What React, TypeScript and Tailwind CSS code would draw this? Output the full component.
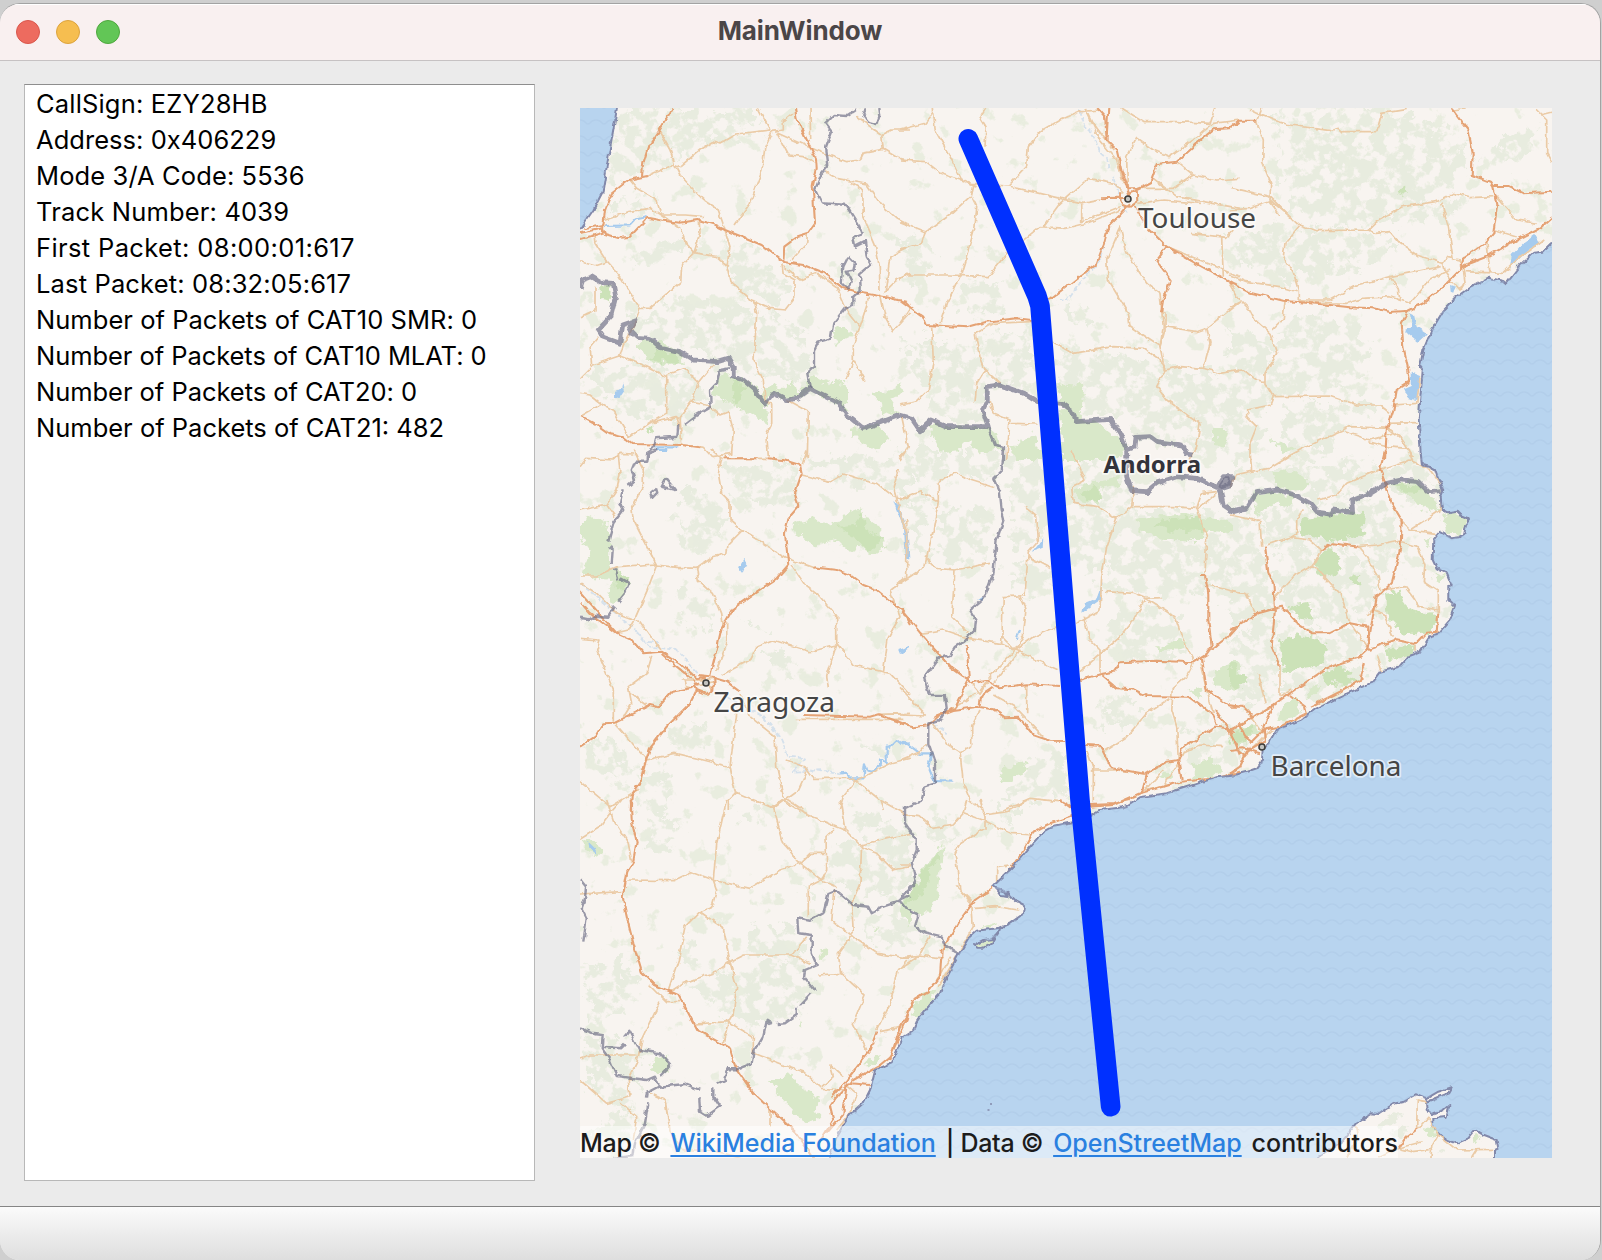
import React from "react";

type Tile = "A" | "B" | "C" | "D" | "E" | "F" | "G" | "H" | "I";

// The map is digitised on a 3x3 sheet grid; every sheet has three units per pixel.
const ORIGIN: Record<Tile, [number, number]> = {
  A: [570, 100], B: [900, 100], C: [1230, 100],
  D: [570, 450], E: [900, 450], F: [1230, 450],
  G: [570, 800], H: [900, 800], I: [1230, 800],
};

const pts = (tile: Tile, s: string) =>
  s.trim().split(/\s+/).map((p) => {
    const [x, y] = p.split(",").map(Number);
    return `${(ORIGIN[tile][0] + x / 3).toFixed(1)} ${(ORIGIN[tile][1] + y / 3).toFixed(1)}`;
  }).join(" L");

const lines = (data: Partial<Record<Tile, string>>) =>
  (Object.keys(data) as Tile[])
    .flatMap((t) => data[t]!.split("|").filter((s) => s.trim()).map((s) => "M" + pts(t, s)))
    .join(" ");

const areas = (data: Partial<Record<Tile, string>>) =>
  (Object.keys(data) as Tile[])
    .flatMap((t) => data[t]!.split("|").filter((s) => s.trim()).map((s) => "M" + pts(t, s) + "Z"))
    .join(" ");

const COAST =
  "M" +
  [
    pts("C", "975,428 966,430 940,455 910,458 870,495 828,550 820,543 775,533 720,562 680,590 640,632 605,690 580,750 570,800 578,810 572,880 566,960 572,1060"),
    pts("F", "572,10 576,45 600,52 615,60 622,80 640,120 632,140 636,180 655,190 680,185 690,195 720,207 705,225 700,255 690,262 665,265 630,245 610,270 608,330 620,355 650,370 665,405 655,410 655,450 675,470 660,510 625,550 600,558 570,605 535,618 508,650 450,665 425,698 330,740 260,775 215,808 140,840 120,875 98,900 95,935 80,955 50,965 0,978"),
    pts("E", "950,982 870,1008 800,1030 720,1042 680,1068"),
    pts("H", "670,22 600,30 550,60 460,78 430,95 390,140 340,200 280,258 300,285 325,290 322,275 350,305 375,318 372,340 330,370 300,383 230,392 205,415 175,465 135,540 120,580 110,590 60,650 50,665 40,690 5,712"),
    pts("G", "990,730 965,790 915,810 900,870 880,910 840,945 820,975 800,1010 775,1080"),
  ].join(" L");

const ATLANTIC = "M" + pts("A", "142,20 135,60 110,200 98,275 70,330 25,395");
const MALLORCA =
  "M" + pts("I", "255,1080 300,1050 340,1020 380,968 425,940 445,942 490,912 522,905 530,900 560,883 590,895 625,875 665,862 655,880 610,898 588,905 590,930 605,942 640,930 658,915 650,950 610,955 610,985 640,1015 680,1030 715,1015 735,990 760,1005 800,1020 805,1045 795,1050 795,1080");
const ISLETS = areas({ H: "222,435 250,420 275,418 300,388 275,430 250,443 232,443" });
const LAGOON = areas({ H: "290,268 310,272 326,290 305,288" });

const FOREST = areas({
  A: "145,24 570,24 560,90 430,125 330,185 175,235 105,270 130,120|40,800 280,790 290,930 200,960 100,880|200,440 330,420 320,480 220,500|180,650 330,600 500,620 700,680 710,850 560,840 400,760 200,700|290,820 380,830 420,900 330,980 290,950|440,430 560,450 680,560 600,620 500,560|110,310 260,290 260,340 110,340",
  B: "0,720 240,720 260,850 240,970 100,960 90,890|260,700 390,690 400,880 290,850|460,720 600,760 780,780 900,840 900,1060 700,1010 650,950 540,950 470,850|800,820 1020,820 1020,1070 900,1040|0,420 60,400 120,480 20,560|180,560 300,550 330,640 200,640|480,600 580,640 570,670 490,640",
  C: "140,24 440,24 640,80 720,150 690,260 600,290 440,370 270,380 180,330 150,240|140,24 440,24 420,90 300,90|170,230 420,220 420,320 280,370|0,420 130,370 400,400 500,440 420,490 200,530 0,500|150,660 300,640 420,720 400,870 200,890 120,850|0,680 120,720 130,880 60,1080 0,1080|160,900 460,920 340,980 300,1060 160,1080|740,180 860,80 940,80 870,200|480,290 640,310 740,290 660,350 520,380",
  D: "320,130 450,130 470,230 420,300 340,290|320,420 430,430 430,500 390,540 330,500|470,40 680,50 670,170 500,160|700,20 1020,20 1020,140 920,100 780,95|40,880 120,870 210,960 180,1020 90,970|220,980 290,950 300,1080 190,1080|570,600 640,600 690,680 640,690|520,510 590,540 580,555|300,850 400,820 400,900 320,890|880,850 970,860 960,920 890,910",
  E: "0,0 300,0 290,100 160,70 60,120|100,170 280,180 260,330 110,350|320,20 425,20 440,260 330,290|490,20 680,60 700,170 640,290 600,380 500,330|640,180 1020,180 1020,430 740,430 620,420|310,340 460,340 460,430 330,430|0,130 90,150 60,330 20,200|660,450 830,500 870,620 670,620 600,570|400,920 500,900 500,1040 300,1040|580,780 680,740 720,800 620,850|860,840 1020,830 1020,960 860,970",
  F: "0,60 440,40 430,110 260,150 200,130 0,180|90,180 460,130 500,220 500,330 440,390 380,290 110,290|0,200 90,220 130,440 130,600 0,520|150,290 380,300 440,420 420,510 340,500 250,540 140,450|0,560 120,560 150,720 70,780 0,740|140,550 410,560 400,620 280,660 160,730|210,680 400,640 400,690 230,760|450,60 570,40 630,130 640,180 500,140|470,580 560,590 500,650 440,650",
  G: "40,500 170,480 210,620 60,680|340,560 480,500 700,470 700,640 560,680 470,650|540,370 680,380 700,470 540,460|780,150 1020,60 1020,260 870,300 790,250|850,350 1020,330 1020,430 900,430|30,700 200,720 190,930 60,880|700,260 770,270 740,320|40,1000 180,920 200,1000 120,1060|240,20 340,60 300,160 230,140|500,20 560,30 560,70 500,60|850,40 930,20 930,80 860,90|330,400 390,420 390,500 340,490",
  H: "0,80 50,130 40,240 0,280|60,80 150,60 170,120 90,140|0,330 60,350 50,420 0,400|270,20 380,10 330,90",
});

const PARKS = areas({
  A: "435,860 460,815 490,835 540,840 570,880 610,850 640,870 670,840 680,885 720,830 780,850 830,845 832,930 800,905 720,870 650,900 610,880 585,912 600,980 540,940 480,910 430,880|205,730 240,715 330,750 345,795 230,785|785,690 820,685 850,705 800,730|910,880 950,880 990,850 1000,880 960,900 980,930 940,950 925,900|840,990 930,970 960,1020 920,1050 870,1020",
  B: "90,975 200,980 270,985 310,1045 240,1060 210,1020 180,1050 120,1058 95,1010|470,850 550,855 545,935 520,960 480,910|480,930 600,970 680,1040 650,1080 490,1080|330,1040 400,1000 430,1080 350,1080|945,990 985,990 975,1040 945,1035",
  C: "115,1005 140,1030 195,1045 155,1060",
  D: "30,215 70,195 120,230 120,340 180,400 150,450 130,460 115,430 130,390 70,385 35,370 60,300 30,260|670,225 740,205 800,225 830,190 870,175 900,215 930,225 945,290 910,315 870,290 840,305 800,270 730,285 680,255",
  E: "710,210 840,190 1000,225 990,250 910,240 910,270 800,270 720,240|520,120 600,90 660,80 650,110 600,120 600,160 530,150|770,590 850,565 850,590 780,605|300,970 355,935 390,960 350,975 310,1005|880,940 930,925 970,955 930,985 885,980|945,660 1000,635 1020,650 1020,720 940,715|780,980 810,960 820,990|865,725 900,715 910,750",
  F: "635,200 660,190 715,205 700,255 650,255|610,370 650,380 620,400|480,105 560,95 600,125 635,190 560,160|70,130 200,135 180,165 130,160 80,200|130,70 180,60 240,90 220,120 140,110|580,265 608,260 600,300|0,850 80,820 90,850 20,890|170,750 210,750 200,800 140,810|250,700 275,720 230,750",
  G: "600,840 635,840 660,820 690,860 730,880 750,900 735,930 755,955 700,970 670,930 640,900|240,800 250,770 290,770 300,800 270,825|35,120 60,112 100,155 75,175|890,790 930,760 920,790 890,800|755,440 775,455 755,480|1020,280 1020,380 990,330|685,660 700,665 695,685|905,375 925,385 910,392",
  H: "70,200 130,140 135,165 120,210 110,310 60,350 0,310 45,260|30,620 100,565 105,600 50,660|240,380 290,370 270,390|228,435 255,422 275,422 250,440",
});

const PARKS_DARK = areas({
  A: "260,750 320,755 335,790 240,780|90,555 122,558 118,605 95,600|230,980 245,980 240,1005|490,850 520,850 510,915 490,905",
  C: "500,270 525,255 530,280 515,295",
  D: "800,230 850,225 880,185 890,240 940,260 900,310 850,260|140,370 175,385 165,420 140,410",
  E: "760,220 900,195 910,240 800,245|550,125 590,110 600,150 560,150",
  F: "215,210 300,195 400,185 395,230 410,250 310,275 210,255|255,330 300,290 335,330 320,375 265,385|145,590 170,560 200,550 240,565 265,560 300,600 260,650 165,665|465,425 510,420 530,470 560,490 610,480 625,515 580,555 520,550 470,500|180,465 235,455 240,480 255,510 190,500|280,670 310,655 340,645 350,670 390,685 350,705 280,695|465,600 550,585 530,620 480,630|360,380 395,378 385,410 365,400|0,640 20,660 45,690 20,720 0,700|0,860 70,825 60,870 10,880|490,105 560,105 570,130 520,125",
  H: "70,210 120,155 120,180 90,200 85,250 50,300 10,310 45,260",
});

const LAKES = areas({
  A: "135,875 155,870 160,850 165,870 148,895 135,890",
  C: "840,505 845,465 880,430 915,405 930,430 900,445 870,475|540,640 552,645 560,680 590,700 580,712 565,725 540,705 525,690 545,680|545,815 570,825 565,860 560,900 535,895 522,865 545,855|660,555 675,560 670,578 662,575",
  D: "500,345 510,345 520,327 535,345 522,352 515,368|970,150 990,170 1000,210 985,195|985,600 1020,588 1020,595 990,612",
  E: "0,605 25,590 22,600|398,305 430,265 428,295|550,485 555,460 590,445 608,395 600,450|228,452 245,440 248,455",
  G: "52,122 80,150 82,165 55,140",
});

const RIVERS = lines({
  A: "105,378 180,376 200,355 230,348",
  D: "810,970 830,968 845,985 880,985 885,940 892,962 905,965 930,945 930,925 950,940 950,890 960,890 980,870 995,883 1020,880|1005,230 1010,320|260,0 295,0|255,-8 325,-8",
  E: "0,878 20,880 60,910 95,910 85,950 105,1000|0,180 20,250 25,325|105,990 160,992|360,540 350,570",
});

const RIVERS_FAINT = lines({
  B: "540,30 555,80 575,95 600,155 622,175 625,205|640,230 655,280 680,345|615,420 600,480 540,550 500,600 480,600",
  D: "30,400 80,440 200,545 240,590 320,600 380,670|200,550 230,575 270,580|470,740 580,800 630,860 655,920 705,925 670,965 760,960 810,970|700,955 760,965|580,800 625,860",
  E: "100,820 140,850",
});

const MAJOR = lines({
  A: "308,24 268,92 235,140 220,190 216,228|30,418 98,398 105,330 125,280 175,240 232,228|98,385 105,402 145,414 180,410 232,353 280,362 330,368 385,360 430,373 465,390 520,412 575,435 640,485 700,495 760,518 820,565 880,580 940,590 1010,605 1020,615|675,24 680,55 715,130 738,175 740,205 728,260 735,370 712,402 680,412 643,440 640,485|30,948 80,975 120,1003 160,1012 185,1032 335,1035 388,1042|462,1075 560,1075|30,400 98,385|40,385 100,375",
  B: "592,24 615,50 620,120 650,150 665,215 680,260 690,290|625,24 620,110|1020,65 990,85 940,88 870,150 830,185 770,192 750,250 710,270 690,280|690,310 660,345 625,380 612,430 590,490 447,600|700,310 745,385 800,440 870,480 960,530 1020,565|800,440 768,480 812,540 790,600 783,640|0,600 70,650 80,675 200,682 260,665 350,655 395,660|600,295 650,293 690,295|660,280 662,310 690,320 712,305 710,265 680,265",
  C: "0,85 30,62 80,62|0,548 60,578 160,602 270,612 360,622 430,625 480,636 535,632 580,610 640,560 680,520 705,495 770,470 860,420 930,385 966,352|665,24 715,90 728,160 725,225 780,245 790,260 802,310 790,400 765,430 700,475 695,500|790,258 835,258 880,280 966,275|535,632 515,670 520,740 535,810 540,845 500,870 490,930 470,990 465,1080",
  D: "30,425 70,470 140,550 185,570 220,610 275,605 330,640 380,685 405,680|30,455 60,490 140,550|275,612 320,650 365,685|30,890 75,860 100,820 135,818 240,765 265,772 305,725 365,715 385,700|380,720 360,760 290,830 240,895 228,930 210,1000 185,1035 182,1080|420,680 440,600 455,535 490,475 560,425 620,385 655,345 645,250 655,205 685,170 675,130 695,70 690,45 640,30 590,25|730,352 800,360 840,375 880,405 920,420 995,480 1020,525|435,685 470,695 510,725|700,795 900,800 925,793 1020,828|370,690 380,720 410,732 435,710 432,680 385,675",
  E: "0,475 70,560 150,650 215,697 255,690 300,712 380,703 480,708|540,690 600,673 640,665 660,637 770,632 880,637 920,612 935,590 925,510 925,430 915,375 900,375|600,673 650,715 700,718 740,738 865,740 940,795 950,825|200,585 207,690 165,775 100,800|0,822 40,832 85,825 120,795 160,780 235,770 280,778 315,802 355,800 400,855 450,872 495,873|235,770 240,740 280,712|555,885 600,887 635,955 740,972 800,935 835,930 845,895 945,830 985,835 1020,915|740,972 725,1030|835,930 845,990|570,1070 640,1065 720,1030 840,995 950,985 1020,965|935,600 975,570 1020,520|905,620 920,720 985,765 1020,770|945,780 1000,850|480,1050 515,1070",
  F: "465,0 450,60 470,110 485,160 515,210 512,290 485,400 440,440 425,520 412,600 390,620 290,655 200,715 130,765 75,800 0,840|105,290 115,365 130,400 135,475 125,590 150,650|0,540 85,490 155,470 200,520 250,550 300,550 360,520 415,530|275,300 310,280 385,290|415,600 500,568 560,580 590,548 620,545 625,490|180,735 225,770 230,790 150,830 100,840 60,880|405,640 390,690 330,725 240,770|0,770 40,770 70,800|130,765 100,830 105,870 50,905 30,950 0,970|0,850 30,905 50,920|25,820 45,860 70,880|0,900 40,895 90,910|415,530 412,600",
  G: "182,0 185,60 200,125 190,185 172,215 158,290 175,370 190,430 215,515 255,555 325,585 380,690 480,745 495,800 550,880 620,945 680,1000 730,1074|1020,620 1010,660 960,770 930,795 850,840 800,890 780,920 790,960 740,1040|990,680 960,780|920,695 900,750 830,840 785,890|830,850 820,940 770,1000|840,850 900,855",
  H: "570,15 510,50 450,70 400,95 370,150 330,210 290,255 225,300 180,360 145,420 125,450 120,530 90,570 40,600 20,650 0,680|480,0 515,25|570,15 640,12 690,0",
});

const MINOR = lines({
  A: "232,228 312,192 330,200 390,150 430,125 450,132 500,102 600,90|268,92 300,150 315,195 330,225 400,300 445,330 465,388|600,90 565,25|605,98 585,140 575,215 540,310 495,375|600,95 640,90 640,65 670,40|620,98 735,150 830,185 870,180 880,160 940,148 985,175 1020,180|620,98 655,165 700,170 735,190|720,24 722,120|860,50 935,105 940,148|935,105 965,90 1020,90|765,215 800,235 890,252 930,310 980,355 1020,375|845,250 878,270 880,350 915,430 928,500 930,570|100,360 175,335 240,325 275,345 350,345 400,350|180,240 200,265 260,300 270,335|275,345 330,385 350,435 372,458 440,470 470,495 480,545 545,600 600,625 645,630 675,590 675,540 640,520 635,490|388,362 390,400 372,458 335,495 332,545 280,590 240,625 210,625 150,530 110,485 75,430 72,405|210,625 190,680 160,735 150,768 230,800 290,830 290,940 240,970 178,1010 130,930 95,912 30,950|30,835 70,795 150,768|30,485 75,497 110,485|75,560 75,630 30,650|85,710 60,740 65,795|290,825 345,805 385,850 365,905 330,950 335,1035|430,795 385,850|365,905 410,912 450,945 475,935 490,990 485,1060 425,1070|30,880 60,885 95,912|465,390 480,440 468,515|550,600 560,640 552,780 580,840 585,900 605,915 605,970 590,1000 595,1070|650,900 715,935 712,1075|340,1035 400,1042 425,1070|800,560 830,630 870,680 850,735 850,780 828,840|850,780 885,845|895,590 890,620 870,680|930,580 945,650 970,695 1020,640|945,580 960,470 1020,440|945,575 980,540 1020,520|640,500 690,540 740,520 800,560|712,402 710,430 665,480|240,970 320,950 335,1000",
  B: "100,24 105,90 150,170 185,240 230,260|0,90 75,70 100,40|0,180 75,185 120,220 210,250 325,258 480,295 550,310 600,300|325,258 380,200 385,140 420,95 480,60 540,35 600,30|255,24 240,50 258,80 255,140|218,255 210,290 150,345 100,380 75,395 65,430 0,450|215,290 230,320 225,380 205,450 180,530 140,610 120,670|0,365 75,395|0,540 20,525 150,525 265,530 320,460 420,380 500,385 560,370 660,330|430,378 480,310 565,235 640,250 670,280|555,24 600,120 650,180 670,250|665,24 730,65 830,65 930,70 945,24|565,40 580,70 640,150|710,115 680,170 682,260|710,115 760,150 810,170 880,120 940,70 1020,60|830,185 880,225 950,240 1020,235|700,265 820,265 880,225|760,235 830,290 1020,325|715,310 790,300 900,310|870,400 980,412 1000,390|965,412 970,530|660,375 680,460 740,550 780,580 790,680 780,740|660,385 620,480 625,540 685,640 690,680 780,740|795,680 890,695 920,685 1020,605|920,685 930,730 910,805|460,725 520,760 640,740 730,745 780,780 795,810 840,800 910,805 960,820 1020,810|795,640 795,690 780,740 795,810 770,860 800,900 900,970 890,1040 870,1080|395,665 280,670 225,700 240,770 255,810 300,850|255,810 230,850 225,905|95,680 100,780 85,870 50,905 0,915|270,900 280,940 330,960 320,1080|330,970 410,972|800,440 960,505 1020,530|0,670 30,625|5,950 25,1040 0,1080|545,310 545,365 660,320",
  C: "80,62 100,120 98,190 122,250 120,300 180,350 210,375 260,392 415,390 440,365 520,320 620,305 670,280 720,293 790,290|80,62 95,24|80,40 130,60 180,75 300,92 325,85 335,95 440,95 455,40 530,28|60,30 100,50|210,375 165,430 160,470 190,520 205,570 205,600|0,262 120,290|0,330 60,325 120,305 150,345|120,290 160,330 205,375|415,390 435,400 480,395 510,430 560,465 645,492|635,310 655,380 670,480|640,490 650,472 690,480 700,510 705,545 690,570 665,540 645,510 640,490|205,600 300,600 380,555 480,530 635,500|205,605 350,610 400,595 480,590 540,610 600,540 660,510|480,530 505,570 510,600|0,525 50,545 150,560 200,575|0,550 30,600 60,630 75,660 120,700 140,760 105,820 105,850 130,890 300,888 380,915 450,915 480,940|0,620 30,605|165,605 160,655 125,690|0,815 40,810 80,840 105,845|130,890 120,915 50,930 50,950 80,980 60,1030 60,1080|705,515 820,520 870,470 940,420|770,420 780,520|800,290 860,360 920,370|795,390 860,410|920,30 950,60 950,160 966,190|670,30 710,24|930,45 966,36|480,985 360,980 290,1010 210,1050 155,1080|475,970 560,968|490,915 560,910 570,830|475,985 510,1010 550,1075|345,995 420,1020 490,1000|415,1025 470,1040 535,1045",
  D: "425,0 455,25 445,70 455,130 480,155 480,210 515,240 650,325 735,355|458,25 590,25|695,75 780,95 820,72 920,100 965,135 1000,150 1020,140|515,240 475,280 470,310 430,320 380,355 385,390 430,430 455,490 460,530|665,345 705,405 750,440 800,500 800,580 850,645 960,670 1020,735|380,355 320,352 260,345 190,210 185,170 220,110 220,60 190,0|260,345 230,425 195,505 175,540 135,550|30,378 80,378 140,350 260,342|30,180 110,165 140,120 150,70 145,10|110,165 135,200|30,565 90,570 80,600 130,720 130,815|30,400 80,430 140,490 210,515 270,600|245,620 230,670 175,710 185,760 160,800|185,730 230,765|455,675 540,630 560,590 610,570 720,605 800,585 770,680 775,715|470,520 470,580 440,660|135,820 230,930 315,910 400,930 480,950 495,1025 610,1075|480,950 500,790|510,735 540,800 615,860 620,950 640,1040 700,1080|680,808 1000,808|650,930 705,950 730,985 850,985 930,1050 940,1080|710,965 685,1020 610,1075|860,990 820,1040 808,1080|850,995 960,940 1020,925|30,995 120,1070 210,1015|475,1080 475,1050 500,1025|30,50 50,25 130,30 150,10 190,12|985,60 970,110 1010,250 1010,380 960,420 990,500 955,560 940,670|345,690 350,710 370,715|700,45 712,0|925,793 1020,790|335,690 385,690|390,680 425,715|380,705 435,695|385,690 430,685",
  E: "0,400 60,360 75,345 100,240 115,155 60,125 0,150|115,155 115,100 165,65 210,90 280,112|75,320 110,355 165,360 270,340|165,360 155,500 205,550|60,550 130,540 205,565 300,580 345,600|305,580 310,440 375,437 385,305 415,270 410,200 375,172|385,320 450,355|360,440 378,480 370,560 345,600|345,600 400,560 470,530|345,600 475,660|345,600 270,680 240,720|360,600 280,700|305,560 345,600|540,665 650,570 700,510 735,445|530,520 600,480 605,380 620,290 650,205 595,170 520,160 515,110 555,90 515,0|650,205 695,170 700,110|695,170 820,170 890,175 905,130 950,125|890,175 920,260 915,370|890,180 950,130|615,425 700,430 735,445 825,500 845,560 880,630|735,445 785,443|925,405 1020,430|550,500 570,570 600,600 600,670|880,640 860,680 820,715 815,780 830,830 835,930|810,745 740,790 680,860 610,905|380,705 380,790|280,735 350,775 430,860|240,780 215,830 215,890 180,905 190,1000 210,1050 250,1080|100,820 140,880 180,905|0,715 80,800|0,795 80,798|160,775 230,730|310,1080 390,1045 480,1055|560,900 580,960 580,1060|575,960 650,960 740,972|840,915 900,885 970,890|0,930 60,905 80,880|725,1030 790,960|740,1020 790,1010 835,940|900,640 920,720 940,790|20,210 20,380|0,20 20,0|215,700 240,730 260,700",
  F: "385,290 410,320 445,380 450,420|95,290 90,215 0,195|110,285 180,262 240,270 275,300|180,262 200,250 200,210 220,175|265,150 320,135 350,100 445,60|0,110 15,75 60,65 120,55 210,0|65,65 60,0|385,290 440,285 510,270|445,60 540,30 600,60 640,115 630,180 540,240 510,210|540,240 620,250|515,275 565,290 585,345 580,395 625,425 625,490|455,420 525,410 570,470 625,480|275,300 250,345 190,380 135,440|250,345 330,430 360,520|435,480 460,490 490,560|150,650 150,740|85,670 105,760|0,425 45,430 75,490|360,520 410,590|440,615 455,660|535,0 550,40|50,780 100,850|410,500 440,470|555,580 555,605|150,740 180,720|80,880 110,850 130,840|60,900 90,870",
  G: "30,118 90,80 120,40 155,0|110,0 130,60 175,130 185,185|30,282 155,275|175,240 310,242 365,215 430,240 540,265 630,210 690,190 755,240|470,0 440,130 430,240 440,270 425,322 390,335 345,380 325,480 295,570|390,335 460,385 480,485 500,560 490,640 475,665 375,672|300,575 340,550 440,515 480,485 520,465 620,465 665,465 720,490|665,465 710,410|545,0 610,22 640,130 690,190|610,22 640,0 700,40 825,90 870,135 1020,100|810,0 825,90|795,85 768,110 770,210 755,240 715,260 715,350|690,190 720,160 765,160|755,240 800,260|795,270 785,360 840,405 920,460 1020,475|875,135 870,250 845,310 850,400 805,460 812,520 745,525|870,140 920,160 970,210 1020,200|812,520 885,585 850,670 890,750|1010,480 985,510 960,610 920,690|465,660 550,710 550,760 640,795 700,815 755,865 830,870|475,665 460,730|270,605 215,720 200,790 175,840 180,890 110,910 30,840|30,775 60,765 200,765|150,905 200,950 190,1020|240,880 285,900 300,990 340,1050 420,1050 520,1074|600,980 600,930|930,695 1000,680|755,860 790,830 780,795 820,830|240,555 290,605 330,605|930,0 1020,50|835,860 860,880 840,940 800,990",
  H: "200,0 190,40 160,75 100,85 60,50 15,45|190,40 260,65 330,100 395,105|240,0 255,50 255,85 180,130 165,160 180,270 215,310 220,380 180,450|255,45 320,35 385,0|290,245 290,200 330,195|225,325 290,320 355,330|0,505 60,465 130,475|60,465 90,410|0,475 60,465|155,470 110,540|170,470 115,560|0,195 30,195|170,260 215,305",
});

const REGIONAL = lines({
  A: "860,28 830,48 790,45 765,70 785,95 768,140 775,195 755,220 735,270 755,310 830,315 865,370 875,400 850,410 855,440 885,425 890,470 903,492 870,520 872,570 850,590 850,615 825,625 790,670 782,715 745,725 732,750 732,800 712,820 720,865|888,24 880,45 895,65 920,72 928,50 925,24|835,470 855,490 850,512 830,515 845,545 830,565 815,550 820,500 835,470|480,805 450,810 440,850 420,870 422,920 380,945 345,972|325,975 322,1010 258,1015 250,1045 232,1055 230,1080",
  B: "265,985 285,1035 312,1040 312,1080",
  D: "265,0 235,10 232,35 195,35 185,60 195,90 175,108|158,118 150,160 160,180 130,220 115,275|120,290 128,300 125,342|135,355 145,385|150,385 178,400 165,430 145,455|135,470 115,500 75,497 55,508 30,503|288,85 275,110 315,120 288,85|258,115 240,130 245,145 262,128 258,115",
  E: "312,0 305,60 280,85 300,130 305,180 312,205 290,270 280,370 258,430 240,455 210,480 228,510 225,540 190,575 165,590 150,615 115,625 75,680 90,735 135,735 140,775 120,810 85,820 85,880 105,940 105,1000 75,1010 65,1050 15,1075",
  H: "15,20 15,70 50,120 50,150 35,190 48,245 0,300 20,325 55,345 45,380 75,400 125,412 135,435 180,465",
  G: "1020,285 975,308 940,320 905,340 895,320 850,315 800,272 775,282 760,340 720,362 682,355 685,400 725,405 725,460 740,495 705,510 702,530 735,570|725,580 690,618|680,620 680,645 645,670 620,672|605,672 590,662 580,710 550,760 545,790 500,808 475,808 465,840 440,852|430,862 430,890 450,920 410,948 390,935 388,895|390,870 345,852 265,860 230,878 228,893|235,910 225,970 195,1030 190,1068 130,1074|30,685 65,698 98,702 95,745 120,780 140,828 230,840 255,830 268,862|95,740 150,745 165,730|165,708 178,692 208,750 270,760 303,795 270,828|30,238 48,260 45,295 35,325 50,355 40,425|1005,275 1020,275",
});

const NATIONAL = lines({
  A: "30,565 38,540 65,530 95,548 130,550 137,590 122,650 85,690 100,712 150,730 158,675 195,662 178,690 200,712 240,715 270,742 330,755 370,780 440,785 475,775 490,800 490,830 520,840 555,870 585,912 612,880 650,900 680,895 720,865 760,885 805,908 830,945 880,985 930,968 990,945",
  B: "0,945 35,955 60,992 95,960 140,980 265,980 248,930 262,900 262,860 300,855 370,880 410,905 485,910 515,930 530,965 630,958 660,1000 680,1050 705,1040 708,1012 750,1010 770,1025 845,1035 860,1062 880,1065",
  E: "680,0 680,80 695,122 740,125 770,100 830,80 890,85 950,112 970,80 995,80 990,105 960,115 970,165 1000,185 1020,180",
  F: "0,182 50,175 80,128 145,120 195,135 240,160 265,190 300,195 310,180 368,188 365,150 420,130 470,100 515,90 565,95 595,125 635,122",
});

const LLIVIA = areas({ E: "955,108 972,82 992,82 992,105 965,115" });
const ISLAND_MINOR = lines({
  I: "505,1045 445,1074|505,1045 575,1025|505,1045 545,1055 605,1048|595,950 565,985|560,985 562,900 590,905|625,1005 605,1040 603,1074|595,950 625,1005 680,1050 790,1048|740,1050 725,1074|380,975 385,1010 350,1074",
});
const ISLAND_MAJOR = lines({ I: "565,985 530,1010 505,1045" });

function MapView() {
  const seaFill = `${COAST} L830 1175 L1565 1175 L1565 243 Z`;
  const westFill = `${ATLANTIC} L565 240 L565 95 Z`;
  return (
    <svg className="block h-[1050px] w-[972px]" viewBox="580 108 972 1050">
      <defs>
        <pattern id="waves" width="16" height="16" patternUnits="userSpaceOnUse" patternTransform="translate(4 4)">
          <path d="M0 4 Q4 4 6 7 Q8 9 10 7 Q12 4 16 4" fill="none" stroke="#a9c6e4" strokeOpacity="0.4" strokeWidth="1.6" />
        </pattern>
        <filter id="foliage" x="0" y="0" width="100%" height="100%">
          <feTurbulence type="fractalNoise" baseFrequency="0.075" numOctaves="5" seed="7" result="n" />
          <feColorMatrix in="n" type="matrix" values="0 0 0 0 0  0 0 0 0 0  0 0 0 0 0  10 0 0 0 -4.3" result="m" />
          <feDisplacementMap in="SourceGraphic" in2="n" scale="34" xChannelSelector="G" yChannelSelector="B" result="d" />
          <feComposite in="d" in2="m" operator="in" />
        </filter>
        <filter id="scrub" x="0" y="0" width="100%" height="100%">
          <feTurbulence type="fractalNoise" baseFrequency="0.045" numOctaves="5" seed="23" result="n" />
          <feColorMatrix in="n" type="matrix" values="0 0 0 0 0  0 0 0 0 0  0 0 0 0 0  14 0 0 0 -9" result="m" />
          <feComposite in="SourceGraphic" in2="m" operator="in" />
        </filter>
        <filter id="rough" x="-5%" y="-5%" width="110%" height="110%">
          <feTurbulence type="fractalNoise" baseFrequency="0.12" numOctaves="3" seed="4" result="n" />
          <feDisplacementMap in="SourceGraphic" in2="n" scale="12" xChannelSelector="R" yChannelSelector="G" />
        </filter>
        <filter id="wiggle" filterUnits="userSpaceOnUse" x="560" y="90" width="1010" height="1090">
          <feTurbulence type="fractalNoise" baseFrequency="0.13" numOctaves="2" seed="11" result="n" />
          <feDisplacementMap in="SourceGraphic" in2="n" scale="5" xChannelSelector="R" yChannelSelector="G" />
        </filter>
      </defs>

      <rect x="580" y="108" width="972" height="1050" fill="#f8f4f0" />
      <rect x="580" y="108" width="972" height="1050" fill="#e9eddf" filter="url(#scrub)" />
      <path d={FOREST} fill="#e8ecdf" filter="url(#foliage)" />
      <g filter="url(#rough)">
        <path d={PARKS} fill="#d9e8c9" />
        <path d={PARKS_DARK} fill="#cce2b8" />
      </g>

      <g strokeLinejoin="round" fill="none" filter="url(#wiggle)">
        <path d={LAKES} fill="#a6cbee" />
        <path d={RIVERS_FAINT} stroke="#d5e1ec" strokeWidth="1.8" strokeDasharray="5 2" />
        <path d={RIVERS} stroke="#a6cbee" strokeWidth="2.2" />
        <path d={MINOR} stroke="#ebcba6" strokeWidth="1.7" />
        <path d={MAJOR} stroke="#e5a375" strokeWidth="2.1" />
      </g>
      <g fill="none" strokeLinejoin="round" stroke="#6f6e86" strokeOpacity="0.68" filter="url(#wiggle)">
        <path d={REGIONAL} strokeWidth="2.4" />
        <path d={NATIONAL} strokeWidth="4.8" />
        <path d={LLIVIA} fill="#6f6e86" fillOpacity="0.68" stroke="none" />
      </g>

      <g fill="#b8d4ef" stroke="#8289ab" strokeWidth="2" strokeLinejoin="round" filter="url(#wiggle)">
        <path d={seaFill} />
        <path d={westFill} />
        <path d={LAGOON} />
        <path d={MALLORCA} fill="#f8f4f0" />
        <path d={ISLETS} fill="#d9e8c9" />
      </g>
      <path d="M987.5 1110h2M990 1104h2" stroke="#8289ab" strokeWidth="1.6" />
      <path d={westFill} fill="url(#waves)" />
      <path d={`${seaFill} ${MALLORCA} Z`} fill="url(#waves)" fillRule="evenodd" />
      <g fill="none">
        <g filter="url(#rough)">
          <path d="M1378 1122l16 -9 6 4 -8 8 -10 3zM1390 1133l14 -8 5 3 -9 9zM1436 1152l6-3 4 6z" fill="#e8ecdf" />
          <path d="M1425 1128l8-3 5 8-8 3zM1472 1141l4-7 6 5-4 5z" fill="#d9e8c9" />
        </g>
        <g filter="url(#wiggle)">
          <path d={ISLAND_MINOR} stroke="#ebcba6" strokeWidth="1.7" />
          <path d={ISLAND_MAJOR} stroke="#e5a375" strokeWidth="2.1" />
        </g>
      </g>

      <g fill="#c4c4c0" stroke="#3e3e3c" strokeWidth="1.6">
        <circle cx="1128" cy="199" r="3" />
        <circle cx="706" cy="683" r="3" />
        <circle cx="1262" cy="747" r="3" />
      </g>
      <g
        fill="#454545"
        stroke="#ffffff"
        strokeOpacity="0.6"
        strokeWidth="3.5"
        strokeLinejoin="round"
        paintOrder="stroke"
        fontFamily="'Noto Sans', sans-serif"
        fontSize="28"
      >
        <text x="1138" y="227.7" textLength="118" lengthAdjust="spacingAndGlyphs">Toulouse</text>
        <text x="713.5" y="712" textLength="121.5" lengthAdjust="spacingAndGlyphs">Zaragoza</text>
        <text x="1270.5" y="776" textLength="131" lengthAdjust="spacingAndGlyphs">Barcelona</text>
        <text x="1103.5" y="473" fontSize="23.5" fontWeight="700" fill="#33333b" textLength="97.5" lengthAdjust="spacingAndGlyphs">Andorra</text>
      </g>

      <path
        d="M968.3 138.8 L1037 296 L1040 306 L1080 800 L1110.7 1106.8"
        fill="none" stroke="#0030ff" strokeWidth="19.6" strokeLinecap="round" strokeLinejoin="round"
      />
    </svg>
  );
}

const DETAILS: [string, string][] = [
  ["CallSign: EZY28HB", "tracking-[0.17px]"],
  ["Address: 0x406229", "tracking-[0.04px]"],
  ["Mode 3/A Code: 5536", "tracking-[0.11px]"],
  ["Track Number: 4039", "tracking-[0.18px]"],
  ["First Packet: 08:00:01:617", "tracking-[0.37px]"],
  ["Last Packet: 08:32:05:617", "tracking-[0.15px]"],
  ["Number of Packets of CAT10 SMR: 0", "tracking-[0.04px]"],
  ["Number of Packets of CAT10 MLAT: 0", "tracking-[-0.06px]"],
  ["Number of Packets of CAT20: 0", "tracking-[-0.04px]"],
  ["Number of Packets of CAT21: 482", "tracking-[0px]"],
];

export default function App() {
  return (
    <div className="h-[1260px] w-[1602px] overflow-hidden bg-[#cfcfcf] pt-[3px] font-['Inter',sans-serif]">
      <div className="flex h-[1257px] w-[1601px] flex-col overflow-hidden rounded-[20px] border-t border-r border-[#a3a3a3] bg-[#ebebeb]">
        <header className="flex h-[57px] shrink-0 items-center border-b border-[#c6c2c3] bg-[#f9f0f0] pl-4 shadow-[inset_0_1px_0_#ffffff]">
          <div className="flex w-[300px] gap-4">
            <span className="size-6 rounded-full border border-[#d9574c] bg-[#ed6b5f]" />
            <span className="size-6 rounded-full border border-[#dca33d] bg-[#f6be50]" />
            <span className="size-6 rounded-full border border-[#4fa73e] bg-[#62c656]" />
          </div>
          <h1 className="w-[968px] pb-0.5 text-center text-[26px] leading-8 font-bold tracking-[-0.1px] text-[#4b4647]">MainWindow</h1>
        </header>

        <main className="flex min-h-0 flex-1 items-start pt-[23px] pl-6">
          <ul className="h-[1097px] w-[511px] border border-t-[#8e8e8e] border-r-[#b8b8b8] border-b-[#b8b8b8] border-l-[#b8b8b8] bg-white pt-px pl-[11px] text-[25.5px] leading-9 text-black">
            {DETAILS.map(([text, cls]) => (
              <li key={text} className="h-9 whitespace-nowrap">
                <span className={cls}>{text}</span>
              </li>
            ))}
          </ul>
          <section className="relative mt-6 ml-[45px] h-[1050px] w-[972px] overflow-hidden">
            <MapView />
            <div className="absolute bottom-0 left-0 flex h-8 w-[818px] items-center justify-between bg-white/50 pt-[3px] text-[25px] font-medium whitespace-nowrap text-[#1c1c1c]">
              <span className="tracking-[-0.3px]">Map ©</span>
              <a className="text-[#2a80e0] underline decoration-2 underline-offset-3">WikiMedia Foundation</a>
              <span className="tracking-[-0.3px]">| Data ©</span>
              <a className="text-[#2a80e0] underline decoration-2 underline-offset-3">OpenStreetMap</a>
              <span>contributors</span>
            </div>
          </section>
        </main>

        <footer className="h-[54px] shrink-0 border-t border-[#858585] bg-linear-to-b from-[#fbfbfb] to-[#dedede]" />
      </div>
    </div>
  );
}
